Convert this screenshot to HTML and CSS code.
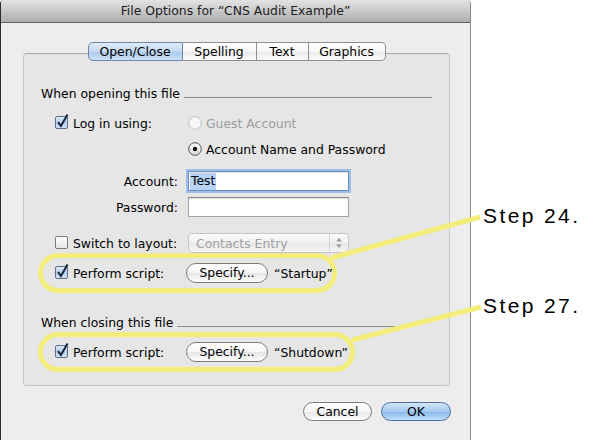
FILE: index.html
```html
<!DOCTYPE html>
<html>
<head>
<meta charset="utf-8">
<title>File Options</title>
<link rel="stylesheet" href="styles.css">
</head>
<body>
<div class="page">
  <div class="window">
    <div class="titlebar">File Options for “CNS Audit Example”</div>
    <div class="content">
      <div class="tabs">
        <div class="tab tab-open selected">Open/Close</div>
        <div class="tab tab-spelling">Spelling</div>
        <div class="tab tab-text">Text</div>
        <div class="tab tab-graphics">Graphics</div>
      </div>
      <div class="panel">
        <div class="section-head">
          <span class="section-title">When opening this file</span>
          <span class="rule"></span>
        </div>
        <div class="form">
          <div class="row row-login">
            <div class="label-col check-label">
              <svg class="checkbox" width="14" height="15" viewBox="0 0 14 15"><defs><linearGradient id="cb1" x1="0" y1="0" x2="0" y2="1"><stop offset="0" stop-color="#e2eefa"/><stop offset="0.5" stop-color="#b3cdec"/><stop offset="1" stop-color="#d2e4f7"/></linearGradient></defs><rect x="0.5" y="2.5" width="12" height="12" rx="1.5" fill="url(#cb1)" stroke="#5f7087"/><path d="M3 8.2 L5.9 12 L12.6 0.6" fill="none" stroke="#17233b" stroke-width="2"/></svg>
              <span>Log in using:</span>
            </div>
            <div class="radio-item disabled">
              <svg class="radio" width="14" height="14" viewBox="0 0 14 14"><circle cx="7" cy="7" r="6.3" fill="#f7f7f7" stroke="#bdbdbd"/></svg>
              <span>Guest Account</span>
            </div>
          </div>
          <div class="row row-radio2">
            <div class="label-col"></div>
            <div class="radio-item">
              <svg class="radio" width="14" height="14" viewBox="0 0 14 14"><defs><linearGradient id="rg1" x1="0" y1="0" x2="0" y2="1"><stop offset="0" stop-color="#ffffff"/><stop offset="1" stop-color="#d9d9d9"/></linearGradient></defs><circle cx="7" cy="7" r="6.3" fill="url(#rg1)" stroke="#4f4f4f"/><circle cx="7" cy="7" r="2.2" fill="#111"/></svg>
              <span>Account Name and Password</span>
            </div>
          </div>
          <div class="row row-account">
            <div class="label-col right">Account:</div>
            <div class="field focused"><span class="sel">Test</span></div>
          </div>
          <div class="row row-password">
            <div class="label-col right">Password:</div>
            <div class="field"></div>
          </div>
          <div class="row row-switch">
            <div class="label-col check-label">
              <svg class="checkbox" width="14" height="15" viewBox="0 0 14 15"><defs><linearGradient id="cb0" x1="0" y1="0" x2="0" y2="1"><stop offset="0" stop-color="#ffffff"/><stop offset="1" stop-color="#e6e6e6"/></linearGradient></defs><rect x="0.5" y="2.5" width="12" height="12" rx="1.5" fill="url(#cb0)" stroke="#7a7a7a"/></svg>
              <span>Switch to layout:</span>
            </div>
            <div class="popup">
              <span class="popup-text">Contacts Entry</span>
              <span class="stepper">
                <svg width="8" height="14" viewBox="0 0 8 14"><path d="M4 2 L7 5.5 L1 5.5 Z" fill="#9a9a9a"/><path d="M4 12 L7 8.5 L1 8.5 Z" fill="#9a9a9a"/></svg>
              </span>
            </div>
          </div>
        </div>
        <div class="oval oval-startup">
          <div class="check-label script-label">
            <svg class="checkbox" width="14" height="15" viewBox="0 0 14 15"><defs><linearGradient id="cb2" x1="0" y1="0" x2="0" y2="1"><stop offset="0" stop-color="#e2eefa"/><stop offset="0.5" stop-color="#b3cdec"/><stop offset="1" stop-color="#d2e4f7"/></linearGradient></defs><rect x="0.5" y="2.5" width="12" height="12" rx="1.5" fill="url(#cb2)" stroke="#5f7087"/><path d="M3 8.2 L5.9 12 L12.6 0.6" fill="none" stroke="#17233b" stroke-width="2"/></svg>
            <span>Perform script:</span>
          </div>
          <div class="button specify">Specify...</div>
          <span class="script-name">“Startup”</span>
        </div>
        <div class="section-head section-close">
          <span class="section-title">When closing this file</span>
          <span class="rule"></span>
        </div>
        <div class="oval oval-shutdown">
          <div class="check-label script-label">
            <svg class="checkbox" width="14" height="15" viewBox="0 0 14 15"><defs><linearGradient id="cb3" x1="0" y1="0" x2="0" y2="1"><stop offset="0" stop-color="#e2eefa"/><stop offset="0.5" stop-color="#b3cdec"/><stop offset="1" stop-color="#d2e4f7"/></linearGradient></defs><rect x="0.5" y="2.5" width="12" height="12" rx="1.5" fill="url(#cb3)" stroke="#5f7087"/><path d="M3 8.2 L5.9 12 L12.6 0.6" fill="none" stroke="#17233b" stroke-width="2"/></svg>
            <span>Perform script:</span>
          </div>
          <div class="button specify">Specify...</div>
          <span class="script-name">“Shutdown”</span>
        </div>
      </div>
      <div class="actions">
        <div class="button cancel">Cancel</div>
        <div class="button ok">OK</div>
      </div>
    </div>
  </div>
  <div class="notes">
    <div class="step step-24">Step 24.</div>
    <div class="step step-27">Step 27.</div>
  </div>
  <svg class="connectors" width="602" height="440" viewBox="0 0 602 440">
    <line x1="331" y1="258" x2="480" y2="217" stroke="#f3ed7c" stroke-width="5"/>
    <line x1="352" y1="340" x2="481" y2="307" stroke="#f3ed7c" stroke-width="5"/>
  </svg>
</div>
</body>
</html>
```

FILE: styles.css
```css
* {
  box-sizing: border-box;
}

html,
body {
  margin: 0;
  padding: 0;
}

body {
  background: #ffffff;
  font-family: "DejaVu Sans", sans-serif;
  font-size: 12.4px;
  color: #000;
}

.page {
  position: relative;
  width: 602px;
  height: 440px;
  display: flex;
  overflow: hidden;
}

.window {
  flex: none;
  width: 471px;
  height: 440px;
  background: #ededed;
  border-left: 1px solid #2a2a2a;
  border-right: 1px solid #8a8a8a;
  border-radius: 4px 4px 0 0;
  display: flex;
  flex-direction: column;
  overflow: hidden;
}

.titlebar {
  flex: none;
  height: 23px;
  background: linear-gradient(#e3e3e3, #adadad);
  border-bottom: 1px solid #616161;
  text-align: center;
  line-height: 22px;
  color: #1c1c1c;
}

.content {
  display: flex;
  flex-direction: column;
  padding: 19px 0 0 22px;
}

/* Tabs */
.tabs {
  display: flex;
  justify-content: center;
  width: 427px;
  height: 19px;
  position: relative;
  z-index: 1;
}

.tab {
  height: 19px;
  line-height: 17px;
  text-align: center;
  border: 1px solid #8e8e8e;
  border-left: none;
  background: linear-gradient(#ffffff, #f6f6f6 50%, #ececec 52%, #fbfbfb);
}

.tab-open {
  width: 95px;
  border-left: 1px solid #6e86a8;
  border-radius: 5px 0 0 5px;
}

.tab-spelling {
  width: 74px;
}

.tab-text {
  width: 52px;
}

.tab-graphics {
  width: 77px;
  border-radius: 0 5px 5px 0;
}

.tab.selected {
  background: linear-gradient(#dfebf8, #c3d8f1 50%, #a9c8ec 52%, #cbe0f6);
  border-color: #6e86a8;
}

/* Panel */
.panel {
  width: 427px;
  height: 333px;
  margin-top: -8px;
  background: #e6e6e6;
  border: 1px solid #c8c8c8;
  border-top-color: #a8a8a8;
  border-radius: 4px;
  padding-top: 32px;
  display: flex;
  flex-direction: column;
}

.section-head {
  display: flex;
  height: 15px;
  line-height: 15px;
  margin: 0 17px 0 17px;
}

.section-title {
  white-space: nowrap;
}

.rule {
  flex: 1;
  margin-left: 4px;
  margin-top: 11px;
  height: 1px;
  background: #8f8f8f;
}

.section-close {
  margin-top: 22px;
  margin-right: 36px;
}

.form {
  display: flex;
  flex-direction: column;
  margin-left: 31px;
}

.row {
  display: flex;
  align-items: center;
  height: 20px;
  gap: 10px;
}

.row-login {
  margin-top: 12px;
}

.row-radio2 {
  margin-top: 6px;
}

.row-account {
  margin-top: 12px;
}

.row-password {
  margin-top: 6px;
}

.row-switch {
  margin-top: 16px;
}

.label-col {
  width: 123px;
  flex: none;
  white-space: nowrap;
}

.label-col.right {
  text-align: right;
}

.check-label {
  display: flex;
  align-items: center;
  gap: 4px;
}

.checkbox {
  flex: none;
  overflow: visible;
  margin-top: -3px;
}

.radio-item {
  display: flex;
  align-items: center;
  gap: 4px;
  white-space: nowrap;
}

.radio-item.disabled {
  color: #9d9d9d;
}

.radio {
  flex: none;
}

.field {
  width: 161px;
  height: 20px;
  background: #ffffff;
  border: 1px solid #a3a3a3;
  border-top-color: #858585;
  box-shadow: inset 0 1px 1px rgba(0, 0, 0, 0.12);
  padding: 1px 0 0 1px;
  line-height: 16px;
}

.field.focused {
  box-shadow: 0 0 0 2px #9cbfe9, inset 0 1px 1px rgba(0, 0, 0, 0.12);
  border-color: #6d8fbd;
}

.sel {
  display: inline-block;
  background: #b7d3f5;
  padding: 0 1px;
  height: 17px;
}

.popup {
  width: 161px;
  height: 20px;
  display: flex;
  align-items: center;
  border: 1px solid #c6c6c6;
  border-radius: 4px;
  background: linear-gradient(#fbfbfb, #f0f0f0 50%, #e8e8e8 52%, #f4f4f4);
  color: #a0a0a0;
}

.popup-text {
  flex: 1;
  padding-left: 7px;
  white-space: nowrap;
}

.stepper {
  width: 19px;
  height: 18px;
  border-left: 1px solid #d2d2d2;
  display: flex;
  align-items: center;
  justify-content: center;
}

/* Annotation ovals */
.oval {
  display: flex;
  align-items: center;
  height: 40px;
  margin-left: 14px;
  border: 5px solid #f3ed7c;
  border-radius: 20px;
  padding-left: 12px;
  white-space: nowrap;
}

.oval-startup {
  width: 299px;
}

.oval-shutdown {
  width: 317px;
  margin-top: 2px;
}

.script-label {
  width: 131px;
  flex: none;
}

.script-name {
  margin-left: 6px;
}

/* Buttons */
.button {
  height: 20px;
  line-height: 18px;
  text-align: center;
  border: 1px solid #7d7d7d;
  border-radius: 10px;
  background: linear-gradient(#ffffff, #f5f5f5 50%, #e6e6e6 52%, #ffffff);
  white-space: nowrap;
}

.specify {
  width: 82px;
  flex: none;
}

.actions {
  display: flex;
  gap: 9px;
  margin-top: 16px;
  margin-left: 280px;
}

.cancel {
  width: 69px;
  height: 19px;
  line-height: 17px;
}

.ok {
  width: 70px;
  height: 19px;
  line-height: 17px;
  border-color: #4e6f9f;
  background: linear-gradient(#d3e5f8, #a6c9ef 50%, #86b6ea 52%, #c4e0fb);
}

/* Step notes */
.notes {
  display: flex;
  flex-direction: column;
  padding-left: 12px;
}

.step {
  font-family: "Liberation Sans", Arial, sans-serif;
  font-size: 21px;
  line-height: 24px;
  letter-spacing: 2.4px;
  color: #000;
  white-space: nowrap;
}

.step-24 {
  margin-top: 204px;
}

.step-27 {
  margin-top: 66px;
}

.connectors {
  position: absolute;
  top: 0;
  left: 0;
  pointer-events: none;
}
```
